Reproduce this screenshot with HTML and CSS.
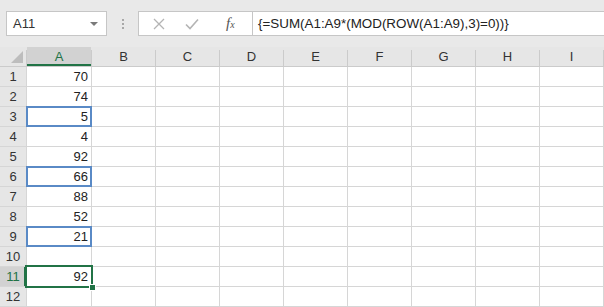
FILE: index.html
```html
<!DOCTYPE html>
<html>

<head>
	<title>Sum every nth row</title>
	<link rel="stylesheet" href="styles.css">
</head>

<body>
	<div class="toolbar">
		<div class="name-box">
			<span>A11</span>
			<span class="arrow"></span>
		</div>
		<div class="dots"><i></i><i></i><i></i></div>
		<div class="buttons">
			<svg class="btn-icon" width="12" height="12" viewBox="0 0 12 12"><path d="M1 1L11 11M11 1L1 11" stroke="#b4b4b4" stroke-width="1.3" fill="none"/></svg>
			<svg class="btn-icon" width="14" height="12" viewBox="0 0 14 12"><path d="M1 6.5L5 10.5L13 1.5" stroke="#b4b4b4" stroke-width="1.6" fill="none"/></svg>
			<span class="fx">f<sub>x</sub></span>
		</div>
		<div class="formula">{=SUM(A1:A9*(MOD(ROW(A1:A9),3)=0))}</div>
	</div>

	<div class="sheet head">
		<div class="corner"><span class="tri"></span></div>
		<div class="col-head active">A</div>
		<div class="col-head">B</div>
		<div class="col-head">C</div>
		<div class="col-head">D</div>
		<div class="col-head">E</div>
		<div class="col-head">F</div>
		<div class="col-head">G</div>
		<div class="col-head">H</div>
		<div class="col-head">I</div>
	</div>
	<div class="sheet" id="rows"></div>

	<script>
var values = [70, 74, 5, 4, 92, 66, 88, 52, 21, '', 92, ''];
var picked = [3, 6, 9];
var rows = document.getElementById('rows');
var i, j, html = '';
for (i = 0; i < values.length; i = i + 1) {
	var n = i + 1;
	html += '<div class="row-head' + (n === 11 ? ' active' : '') + '">' + n + '</div>';
	var cls = 'cell num';
	if (picked.indexOf(n) !== -1) {
		cls += ' picked';
	}
	if (n === 11) {
		cls += ' current';
	}
	html += '<div class="' + cls + '">' + values[i] + '</div>';
	for (j = 0; j < 8; j = j + 1) {
		html += '<div class="cell"></div>';
	}
}
rows.innerHTML = html;
	</script>
</body>

</html>
```

FILE: styles.css
```css
body {
	margin: 0;
	width: 604px;
	height: 307px;
	overflow: hidden;
	background: #ffffff;
	font-family: "Liberation Sans", Arial, sans-serif;
	color: #222222;
}

.toolbar {
	height: 47px;
	background: #e9e9e9;
	display: flex;
	align-items: flex-start;
	padding-top: 11px;
	box-sizing: border-box;
}

.name-box {
	margin-left: 6px;
	width: 101px;
	height: 25px;
	box-sizing: border-box;
	background: #ffffff;
	border: 1px solid #c6c6c6;
	display: flex;
	align-items: center;
	justify-content: space-between;
	padding: 0 8px 0 6px;
	font-size: 13px;
	color: #333333;
}

.arrow {
	width: 0;
	height: 0;
	border-left: 4px solid transparent;
	border-right: 4px solid transparent;
	border-top: 4px solid #7a7a7a;
}

.dots {
	width: 31px;
	height: 25px;
	display: flex;
	flex-direction: column;
	align-items: center;
	justify-content: center;
	gap: 2px;
}

.dots i {
	width: 2px;
	height: 2px;
	background: #a8a8a8;
}

.buttons {
	width: 114px;
	height: 25px;
	box-sizing: border-box;
	background: #ffffff;
	border: 1px solid #c6c6c6;
	border-right: none;
	display: flex;
	align-items: center;
	padding-left: 14px;
	gap: 20px;
}

.fx {
	font-family: "Liberation Serif", serif;
	font-style: italic;
	font-size: 15px;
	color: #555555;
	margin-left: 7px;
}

.fx sub {
	font-size: 10px;
	vertical-align: 0;
}

.formula {
	flex: 1;
	height: 25px;
	box-sizing: border-box;
	background: #ffffff;
	border: 1px solid #c6c6c6;
	border-right: none;
	padding-left: 5px;
	font-size: 13.4px;
	line-height: 23px;
	color: #222222;
}

.sheet {
	display: grid;
	grid-template-columns: 26px 64px repeat(8, 63px);
	grid-auto-rows: 19px;
	gap: 1px;
	background: #d6d6d6;
	padding-bottom: 1px;
}

.sheet.head {
	background: linear-gradient(#e6e6e6 3px, #cbcbcb 3px);
}

.corner,
.col-head,
.row-head {
	background: #e6e6e6;
	font-size: 13px;
	color: #333333;
	display: flex;
	align-items: center;
	justify-content: center;
}

.corner {
	justify-content: flex-end;
	align-items: flex-end;
	padding: 0 3px 3px 0;
}

.tri {
	width: 0;
	height: 0;
	border-left: 12px solid transparent;
	border-bottom: 12px solid #bdbdbd;
}

.col-head.active,
.row-head.active {
	background: #d2d2d2;
	color: #217346;
}

.col-head.active {
	box-shadow: inset 0 -2px 0 #217346;
}

.row-head.active {
	box-shadow: inset -2px 0 0 #217346;
}

.cell {
	background: #ffffff;
	font-size: 13px;
	line-height: 19px;
}

.num {
	text-align: right;
	padding-right: 3px;
}

.picked {
	position: relative;
	z-index: 1;
	outline: 2px solid #5a8ac6;
	outline-offset: -1px;
}

.current {
	position: relative;
	z-index: 1;
	outline: 2px solid #217346;
	outline-offset: 0;
}

.current::after {
	content: "";
	position: absolute;
	right: -5px;
	bottom: -5px;
	width: 5px;
	height: 5px;
	background: #217346;
	border: 1px solid #ffffff;
}
```
